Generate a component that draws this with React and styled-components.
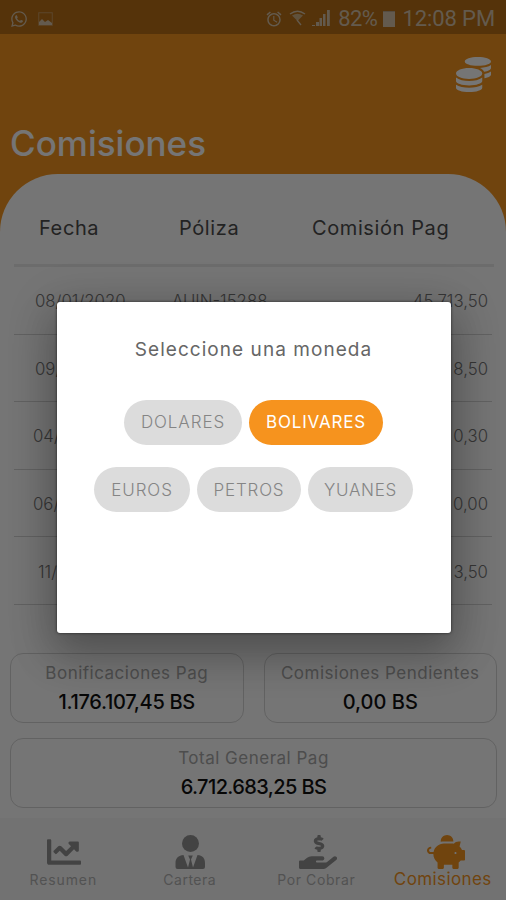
import React, { useState } from 'react';
import styled, { createGlobalStyle } from 'styled-components';
import {
  FaChartLine,
  FaCoins,
  FaHandHoldingUsd,
  FaPiggyBank,
  FaWhatsapp,
} from 'react-icons/fa';
import { MdAlarm } from 'react-icons/md';

const GlobalStyle = createGlobalStyle`
  * {
    box-sizing: border-box;
  }

  body {
    margin: 0;
    font-family: Inter, 'Open Sans', sans-serif;
  }
`;

const Screen = styled.div`
  position: relative;
  display: flex;
  flex-direction: column;
  width: 506px;
  height: 900px;
  overflow: hidden;
  background: #f5951f;
`;

const StatusBar = styled.div`
  display: flex;
  align-items: center;
  justify-content: space-between;
  height: 34px;
  padding: 3px 11px 0 10px;
  background: #b96f16;
  color: #d8c5aa;
  font-family: Roboto, sans-serif;
  font-size: 22px;
`;

const StatusGroup = styled.div`
  display: flex;
  align-items: center;
  gap: ${(props) => props.$gap}px;
`;

const StatusText = styled.span`
  letter-spacing: ${(props) => props.$track || 0}px;
  margin-left: ${(props) => props.$left || 0}px;
  line-height: 26px;
`;

const Battery = styled.span`
  width: 12px;
  height: 16px;
  border-top: 1px solid #b9a68c;
  background: #d8c5aa;
`;

const Header = styled.header`
  display: flex;
  flex-direction: column;
  height: 140px;
  padding: 23px 15px 0 10px;
  color: #fff;
`;

const CoinsButton = styled.button`
  align-self: flex-end;
  display: flex;
  padding: 0;
  border: none;
  background: none;
  color: #fff;
`;

const Title = styled.h1`
  margin: 29px 0 0;
  font-size: 35px;
  font-weight: 500;
  line-height: 44px;
  letter-spacing: 0;
`;

const Sheet = styled.main`
  flex: 1;
  display: flex;
  flex-direction: column;
  padding-top: 14px;
  background: #fff;
  border-radius: 58px 58px 0 0;
`;

const TableHead = styled.div`
  display: grid;
  grid-template-columns: 140px 133px 1fr;
  align-items: center;
  height: 79px;
  margin: 0 12px 0 14px;
  padding: 4px 0 0 25px;
  border-bottom: 3px solid #ececec;
  color: #4c4c4c;
  font-size: 20px;
  letter-spacing: 0.6px;
`;

const TableRow = styled.div`
  display: grid;
  grid-template-columns: 134px 1fr 1fr;
  align-items: center;
  height: 67.6px;
  margin: 0 14px;
  padding: 2px 4px 0 0;
  border-bottom: 1px solid #d6d6d6;
  color: #777;
  font-size: 16.8px;
  font-weight: 300;
`;

const Cell = styled.span`
  text-align: ${(props) => props.$align || 'left'};
  padding-left: ${(props) => props.$left || 0}px;
`;

const Summary = styled.section`
  display: grid;
  grid-template-columns: 1fr 1fr;
  gap: 15px 20px;
  margin: 48px 9px 0 10px;
`;

const Card = styled.div`
  grid-column: ${(props) => (props.$wide ? '1 / -1' : 'auto')};
  display: flex;
  flex-direction: column;
  align-items: center;
  height: 70px;
  padding-top: 7px;
  border: 1px solid #d6d6d6;
  border-radius: 13px;
`;

const CardLabel = styled.span`
  color: #a8a8a8;
  font-size: 17px;
  line-height: 24px;
  letter-spacing: 0.5px;
`;

const CardValue = styled.span`
  margin-top: 4px;
  color: #111;
  font-size: 20px;
  font-weight: 500;
  line-height: 26px;
  letter-spacing: ${(props) => props.$track || 0}px;
`;

const TabBar = styled.nav`
  display: grid;
  grid-template-columns: repeat(4, 1fr);
  height: 82px;
  margin-top: auto;
  background: #f9f9f9;
`;

const Tab = styled.div`
  display: flex;
  flex-direction: column;
  align-items: center;
  padding-top: 17px;
  color: ${(props) => (props.$active ? '#f5951f' : '#939393')};

  svg {
    width: 38px;
    height: 34px;
    margin-left: ${(props) => props.$shift || 0}px;
  }
`;

const TabLabel = styled.span`
  margin-top: ${(props) => (props.$active ? 0 : 1)}px;
  color: ${(props) => (props.$active ? '#f5951f' : '#b3b3b3')};
  font-size: ${(props) => (props.$active ? 17 : 14)}px;
  line-height: 20px;
  letter-spacing: ${(props) => props.$track}px;
`;

const Backdrop = styled.div`
  position: absolute;
  inset: 0;
  display: flex;
  justify-content: center;
  align-items: flex-start;
  padding: 302px 0 0 1px;
  background: rgba(0, 0, 0, 0.54);
`;

const Dialog = styled.div`
  display: flex;
  flex-direction: column;
  align-items: center;
  width: 394px;
  height: 331px;
  padding-top: 34px;
  border-radius: 3px;
  background: #fff;
  box-shadow: 0 20px 42px 3px rgba(0, 0, 0, 0.22),
    0 9px 46px 8px rgba(0, 0, 0, 0.14), 0 0 3px rgba(0, 0, 0, 0.65);
`;

const DialogTitle = styled.h2`
  margin: 1px 0 36.5px;
  color: #666;
  font-size: 19px;
  font-weight: 400;
  line-height: 26px;
  letter-spacing: 1.05px;
`;

const Options = styled.div`
  display: flex;
  gap: 7px;
  margin-bottom: 22.5px;
`;

const Option = styled.button`
  width: ${(props) => props.$width}px;
  height: 45px;
  padding: 0;
  border: none;
  border-radius: 23px;
  background: ${(props) => (props.$selected ? '#f6931e' : '#dcdcdc')};
  color: ${(props) => (props.$selected ? '#fff' : '#858585')};
  font-family: inherit;
  font-size: 17px;
  font-weight: ${(props) => (props.$selected ? 400 : 300)};
  letter-spacing: ${(props) => props.$track}px;
`;

const rows = [
  { date: '08/01/2020', policy: 'AUIN-15288', amount: '45.713,50', left: 21 },
  { date: '09/01', amount: '8,50', left: 21 },
  { date: '04/02', amount: '0,30', left: 19 },
  { date: '06/02', amount: '0,00', left: 19 },
  { date: '11/02', amount: '3,50', left: 24 },
];

const currencies = [
  [
    { name: 'DOLARES', width: 118, track: 0.9 },
    { name: 'BOLIVARES', width: 134, track: 0.8 },
  ],
  [
    { name: 'EUROS', width: 96, track: 0.9 },
    { name: 'PETROS', width: 104, track: 0.8 },
    { name: 'YUANES', width: 105, track: 0.7 },
  ],
];

const AgentIcon = () => (
  <svg viewBox='0 0 38 34' fill='currentColor'>
    <circle cx='19.500' cy='8.500' r='8.500' />
    <path d='M4.500 34V28c0-5 3-7.500 8-8l4.500 12.500 2-8-1.800-4h4.600l-1.800 4 2 8L26.500 20c5 .5 7.500 3 7.500 8v4q0 2-2 2H6.500q-2 0-2-2z' />
  </svg>
);

const PictureIcon = () => (
  <svg width='15' height='14' viewBox='0 0 15 14'>
    <rect x='0.75' y='0.75' width='13.5' height='12.5' fill='none' stroke='currentColor' opacity='0.5' />
    <path d='M1 13V10l3-3 3 3 3-2 4 3v2z' fill='currentColor' />
  </svg>
);

const WifiIcon = () => (
  <svg width='17' height='17' viewBox='0 0 17 17'>
    <path d='M1 4Q8.500-1.500 16 4' fill='none' stroke='currentColor' strokeWidth='1.500' />
    <path d='M3 5.500Q8.500 2 14 5.500L8.500 11z' fill='currentColor' opacity='0.75' />
    <path d='M8 10l4 5' stroke='currentColor' strokeWidth='1.300' />
  </svg>
);

const SignalIcon = () => (
  <svg width='18' height='17' viewBox='0 0 18 17' fill='currentColor'>
    <path d='M0 16h3v-1H0z' />
    <rect x='4' y='12' width='3' height='4' />
    <rect x='7.500' y='8' width='2.500' height='8' />
    <rect x='11' y='4' width='2.500' height='12' />
    <rect x='15' y='0' width='2.800' height='16' />
  </svg>
);

const tabs = [
  { name: 'Resumen', icon: FaChartLine, track: 0.9, shift: 2 },
  { name: 'Cartera', icon: AgentIcon, track: 0.5 },
  { name: 'Por Cobrar', icon: FaHandHoldingUsd, track: 0.6, shift: 3 },
  { name: 'Comisiones', icon: FaPiggyBank, track: 0.4, shift: 6, active: true },
];

const App = () => {
  const [currency, setCurrency] = useState('BOLIVARES');

  return (
    <Screen>
      <GlobalStyle />
      <StatusBar>
        <StatusGroup $gap={10}>
          <FaWhatsapp size={18} />
          <PictureIcon />
        </StatusGroup>
        <StatusGroup $gap={6}>
          <MdAlarm size={18} />
          <WifiIcon />
          <SignalIcon />
          <StatusText $left={2} $track={-0.5}>82%</StatusText>
          <Battery />
          <StatusText $left={1} $track={-0.1}>12:08 PM</StatusText>
        </StatusGroup>
      </StatusBar>

      <Header>
        <CoinsButton>
          <FaCoins size={35} />
        </CoinsButton>
        <Title>Comisiones</Title>
      </Header>

      <Sheet>
        <TableHead>
          <span>Fecha</span>
          <span>Póliza</span>
          <span>Comisión Pag</span>
        </TableHead>
        {rows.map((row) => (
          <TableRow key={row.date}>
            <Cell $left={row.left}>{row.date}</Cell>
            <Cell $left={24}>{row.policy}</Cell>
            <Cell $align='right'>{row.amount}</Cell>
          </TableRow>
        ))}

        <Summary>
          <Card>
            <CardLabel>Bonificaciones Pag</CardLabel>
            <CardValue $track={-0.3}>1.176.107,45 BS</CardValue>
          </Card>
          <Card>
            <CardLabel>Comisiones Pendientes</CardLabel>
            <CardValue>0,00 BS</CardValue>
          </Card>
          <Card $wide>
            <CardLabel>Total General Pag</CardLabel>
            <CardValue $track={-0.6}>6.712.683,25 BS</CardValue>
          </Card>
        </Summary>

        <TabBar>
          {tabs.map(({ name, icon: Icon, track, shift, active }) => (
            <Tab key={name} $active={active} $shift={shift}>
              <Icon />
              <TabLabel $active={active} $track={track}>{name}</TabLabel>
            </Tab>
          ))}
        </TabBar>
      </Sheet>

      <Backdrop>
        <Dialog>
          <DialogTitle>Seleccione una moneda</DialogTitle>
          {currencies.map((group, index) => (
            <Options key={index}>
              {group.map(({ name, width, track }) => (
                <Option
                  key={name}
                  $width={width}
                  $track={track}
                  $selected={name === currency}
                  onClick={() => setCurrency(name)}
                >
                  {name}
                </Option>
              ))}
            </Options>
          ))}
        </Dialog>
      </Backdrop>
    </Screen>
  );
};

export default App;
